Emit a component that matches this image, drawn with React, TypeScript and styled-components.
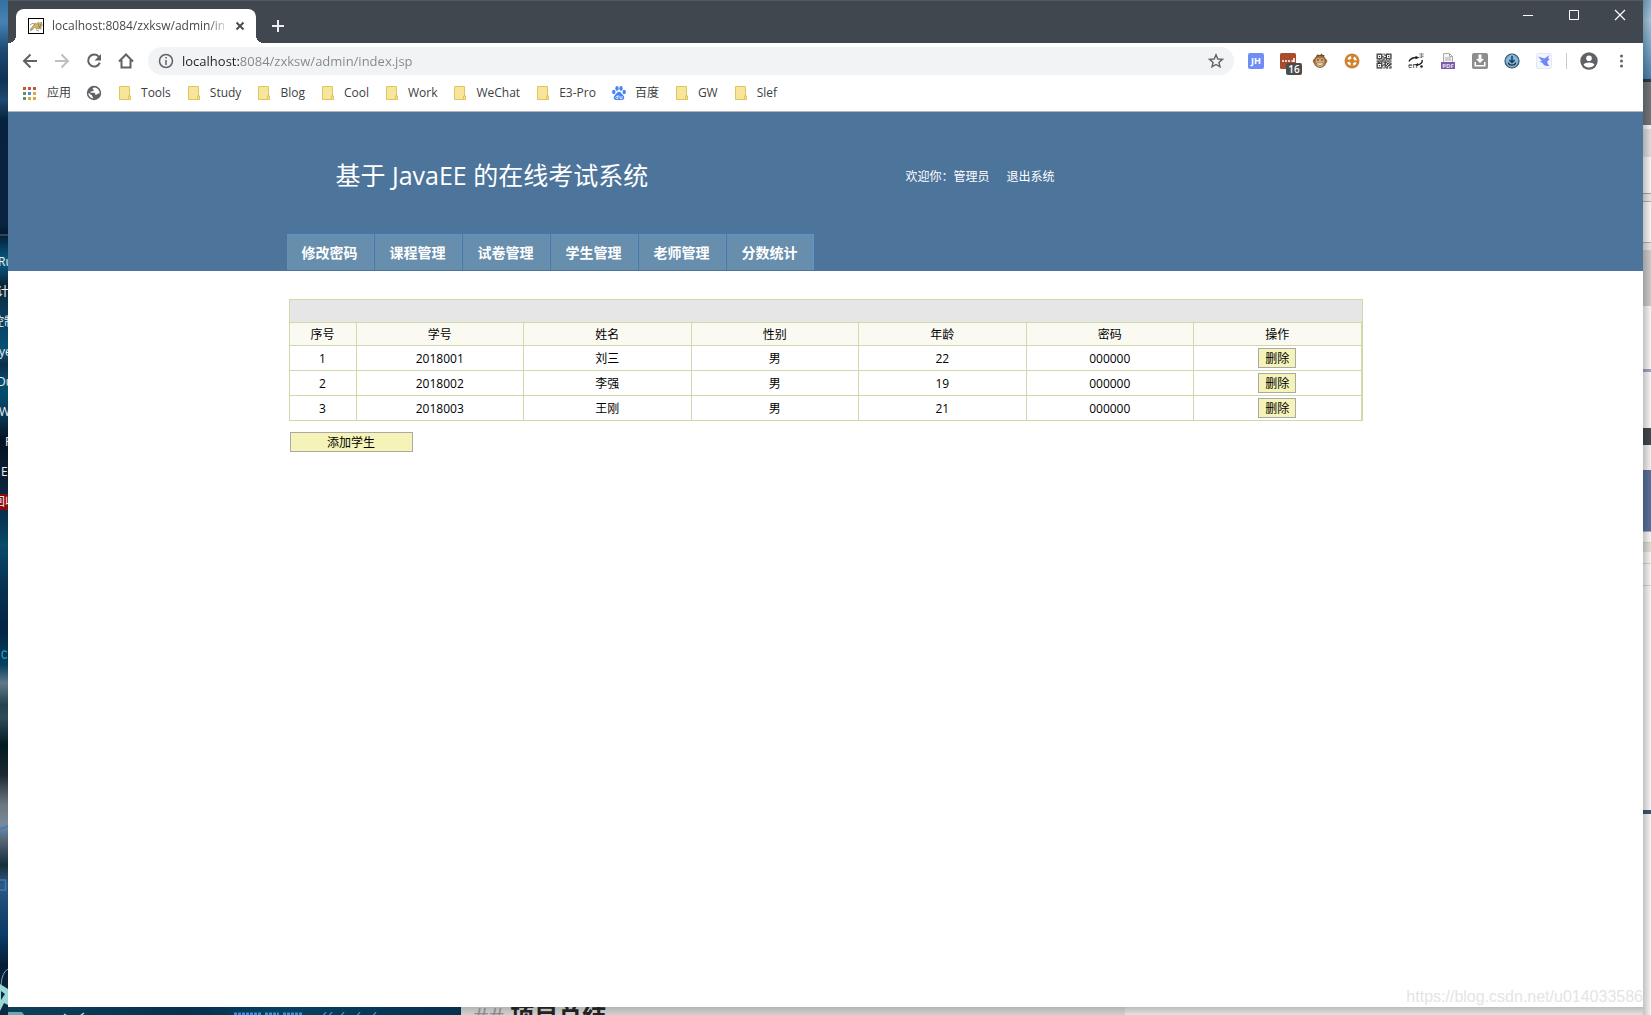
import React from "react";
import styled, { createGlobalStyle, css } from "styled-components";

const uiFont = `"Open Sans", "Noto Sans CJK SC", sans-serif`;

const GlobalStyle = createGlobalStyle`
  * { box-sizing: border-box; }
  body { margin: 0; font-family: ${uiFont}; font-size: 12px; color: #000; }
  button, input { font-family: inherit; }
`;

/* ---------- desktop behind the window ---------- */

const Desktop = styled.div`
  display: grid;
  grid-template-columns: 8px minmax(0, 1fr) 8px;
  grid-template-rows: minmax(0, 1fr) 8px;
  height: 100vh;
  min-height: 600px;
  overflow: hidden;
  background: #0a2d4c;
`;

const LeftEdge = styled.div`
  grid-row: 1 / 3;
  display: flex;
  flex-direction: column;
  overflow: hidden;
  padding-top: 254px;
  background: linear-gradient(
    #35709f 0, #4682b4 22px, #1c4a74 50px, #0d3355 80px, #1d4a70 100px, #06223d 120px,
    #08243f 225px, #04192e 234px, #587085 235px, #05203a 236px, #086088 262px, #0a2438 285px, #0b3a58 310px,
    #075078 350px, #0a2e48 365px, #075070 382px, #054060 410px, #051220 440px, #0a2036 480px,
    #063552 520px, #0a4a6a 545px, #06304f 590px, #042444 630px, #05405f 665px, #607888 683px,
    #24424f 705px, #2f4a58 718px, #021a22 745px, #1c2932 775px, #6c7882 805px, #7a8a98 825px,
    #35475a 853px, #15303a 865px, #2f5a80 885px, #174672 910px, #0a3a66 935px, #071c36 965px,
    #0c2c46 100%
  );
`;

const Shortcuts = styled.ul`
  margin: 0 0 117px;
  padding: 0;
  list-style: none;
`;

const Shortcut = styled.li<{ $shift: number; $selected?: boolean }>`
  height: 16px;
  margin: 0 0 14px;
  line-height: 16px;
  text-indent: ${(p) => p.$shift}px;
  white-space: nowrap;
  color: #eee;
  background: ${(p) => (p.$selected ? "#8c0a10" : "transparent")};
`;

const DesktopArt = styled.svg`
  display: block;
  flex: none;
  width: 8px;
  height: 370px;
`;

const RightEdge = styled.div`
  grid-row: 1 / 3;
  grid-column: 3;
  background: linear-gradient(90deg, rgba(0, 0, 0, 0.24), rgba(0, 0, 0, 0.04)),
    linear-gradient(
      #86b4d4 0, #a8cce2 20px, #7fb0d2 45px, #4a86b4 79px, #2c3c48 79px 82px, #75787e 82px 125px,
      #fff 125px 129px, #e4e6e8 129px 157px, #fff 157px 193px, #a8a8a8 193px 194px,
      #f0f0f0 194px 201px, #b4b4b4 201px 202px, #fff 202px 242px, #b4b4b4 242px 243px,
      #eee 243px 250px, #d2d2d2 250px 306px, #fff 306px 369px, #a5abc8 369px 372px,
      #fff 372px 428px, #444a52 428px 445px, #fafafa 445px 470px, #5a74a0 470px 531px,
      #aab6cc 531px 532px, #fff 532px 542px, #dcdfbc 542px 543px, #e8e8e0 543px 552px,
      #fff 552px 563px, #dcdfbc 563px 564px, #fff 564px 585px, #dcdfbc 585px 586px,
      #fff 586px 810px, #3c5a78 810px 814px, #fff 814px
    );
`;

const BottomEdge = styled.div`
  grid-column: 2;
  grid-row: 2;
  display: flex;
  overflow: hidden;
`;

const BottomWallpaper = styled.div`
  flex: none;
  width: 453px;
  overflow: hidden;
  background: linear-gradient(90deg, #0d4058, #07304e 40%, #064060 60%, #06304e);
`;

const EditorSliver = styled.div`
  flex: none;
  width: 664px;
  padding-left: 12px;
  overflow: hidden;
  white-space: nowrap;
  font-size: 24px;
  line-height: 18px;
  color: #8a8a8a;
  background: linear-gradient(#b4b4b4, #d0d0d0);

  b { color: #222; }
`;

const PreviewSliver = styled.div`
  flex: 1;
  background: linear-gradient(#bcbcbc, #e2e2e2);
`;

/* ---------- browser chrome ---------- */

const Window = styled.div`
  grid-column: 2;
  grid-row: 1;
  display: flex;
  flex-direction: column;
  min-width: 0;
  background: #fff;
`;

const TabStrip = styled.div`
  display: flex;
  height: 43px;
  padding: 0 0 0 8px;
  align-items: flex-end;
  background: #40474f;
  border-top: 1px solid #535a61;
`;

const Tab = styled.div`
  position: relative;
  display: flex;
  align-items: center;
  width: 240px;
  height: 34px;
  padding: 0 8px 0 12px;
  gap: 8px;
  border-radius: 8px 8px 0 0;
  background: #fff;

  &::before,
  &::after {
    content: "";
    position: absolute;
    bottom: 0;
    width: 8px;
    height: 8px;
  }
  &::before {
    left: -8px;
    background: radial-gradient(circle at 0 0, transparent 8px, #fff 8px);
  }
  &::after {
    right: -8px;
    background: radial-gradient(circle at 100% 0, transparent 8px, #fff 8px);
  }
`;

const TabTitle = styled.span`
  flex: 1;
  overflow: hidden;
  white-space: nowrap;
  line-height: 16px;
  color: #45494d;
  mask-image: linear-gradient(90deg, #000 156px, transparent 178px);
`;

const iconButton = css`
  display: inline-flex;
  align-items: center;
  justify-content: center;
  flex: none;
  padding: 0;
  border: 0;
  background: none;
  svg { display: block; }
`;

const TabButton = styled.button`
  ${iconButton}
  width: 16px;
  height: 16px;
`;

const NewTabButton = styled.button`
  ${iconButton}
  width: 28px;
  height: 28px;
  margin: 0 auto 3px 8px;
`;

const CaptionButton = styled.button`
  ${iconButton}
  align-self: flex-start;
  width: 46px;
  height: 28px;
`;

const Toolbar = styled.div`
  display: flex;
  align-items: center;
  height: 36px;
  padding: 0 6px;
`;

const ToolButton = styled.button`
  ${iconButton}
  position: relative;
  width: 32px;
  height: 28px;
`;

const AddressBar = styled.form`
  display: flex;
  flex: 1;
  align-items: center;
  min-width: 0;
  height: 28px;
  margin: 0 6px;
  padding: 0 2px 0 10px;
  gap: 8px;
  border-radius: 14px;
  background: #f1f3f4;
`;

const AddressInput = styled.input`
  flex: 1;
  min-width: 0;
  height: 24px;
  padding: 0;
  border: 0;
  outline: 0;
  font-size: 13px;
  color: transparent;
  background: linear-gradient(90deg, #202124 58px, #80868b 58px);
  background-clip: text;
  -webkit-background-clip: text;
`;

const ToolDivider = styled.span`
  width: 1px;
  height: 16px;
  margin: 0 6px;
  background: #c8cacd;
`;

const JhBadge = styled.span`
  width: 16px;
  height: 16px;
  border-radius: 2px;
  font-size: 9px;
  font-weight: 700;
  line-height: 16px;
  text-align: center;
  color: #fff;
  background: #6f8ef5;
`;

const CountBadge = styled.span`
  position: absolute;
  right: 2px;
  bottom: 0;
  width: 16px;
  height: 12px;
  border-radius: 2px;
  font-size: 10px;
  font-weight: 600;
  line-height: 12px;
  text-align: center;
  color: #fff;
  background: #4c4c4c;
`;

const Bookmarks = styled.nav`
  display: flex;
  align-items: center;
  height: 33px;
  padding: 0 15px 4px;
  gap: 15px;
  border-bottom: 1px solid #b4b6b8;
`;

const Bookmark = styled.a`
  display: flex;
  align-items: center;
  gap: 8px;
  line-height: 20px;
  white-space: nowrap;
  text-decoration: none;
  color: #3c4043;
  svg { display: block; }
`;

/* ---------- page ---------- */

const Page = styled.div`
  display: flex;
  flex: 1;
  flex-direction: column;
  min-height: 0;
`;

const Banner = styled.header`
  background: #4d749b;
`;

const Container = styled.div`
  width: 1080px;
  max-width: 100%;
  margin: 0 auto;
`;

const BannerTop = styled.div`
  display: grid;
  grid-template-columns: minmax(0, 1fr) 460px;
  align-items: center;
  height: 122px;
  padding: 4px 0 0 50px;
  color: #fff;
`;

const SystemTitle = styled.h1`
  margin: 0;
  font-size: 25px;
  font-weight: 400;
  line-height: 36px;
`;

const Account = styled.div`
  display: flex;
  gap: 17px;
  padding-top: 4px;
  line-height: 20px;
  a { color: #fff; text-decoration: none; }
`;

const Menu = styled.nav`
  display: flex;
  gap: 1px;
  height: 37px;
  padding-left: 1px;
`;

const MenuLink = styled.a`
  width: 87px;
  height: 36px;
  border: solid #5f93cb;
  border-width: 1px 1px 0 0;
  font-size: 14px;
  font-weight: 700;
  line-height: 36px;
  text-align: center;
  text-decoration: none;
  color: #fff;
  background: #688eae;
`;

const Content = styled.main`
  padding: 28px 3px 0;
`;

const TableFrame = styled.div`
  border: solid #d3d8a8;
  border-width: 1px 1px 0;
`;

const StudentTable = styled.table`
  width: 100%;
  table-layout: fixed;
  border-collapse: separate;
  border-spacing: 0;
  line-height: 16px;
  text-align: center;

  th, td {
    height: 25px;
    padding: 2px 0 0;
    font-weight: 400;
    border: solid #d3d8a8;
    border-width: 0 1px 1px 0;
  }
  thead th { height: 23px; background: #fafaf3; }
  thead td { height: 23px; border-right-width: 0; background: #e6e6e6; }
  tbody td:last-child { padding: 0; }
`;

const FormButton = styled.button<{ $wide?: boolean }>`
  display: block;
  width: ${(p) => (p.$wide ? "123px" : "38px")};
  height: 20px;
  margin: ${(p) => (p.$wide ? "11px 1px 0" : "0 auto")};
  padding: 2px 0 0;
  border: 1px solid #a9a9a9;
  font-size: 12px;
  line-height: 16px;
  color: #000;
  background: #f5f3b8;
`;

const Watermark = styled.div`
  margin: auto 0 1px;
  align-self: flex-end;
  font-family: "Liberation Sans", Arial, sans-serif;
  font-size: 16px;
  line-height: 18px;
  color: #e4e4e4;
`;

/* ---------- icons ---------- */

const Line: React.FC<{ d: string; color?: string; w?: number; size?: number }> = ({
  d, color = "#5f6368", w = 2, size = 16,
}) => (
  <svg width={size} height={size} viewBox="0 0 16 16" fill="none" stroke={color} strokeWidth={w}>
    <path d={d} />
  </svg>
);

const FolderIcon = () => (
  <svg width="16" height="16" viewBox="0 0 16 16">
    <path d="M2.5 1.5h10v9.500h1v3.500h-11z" fill="#f7e69a" stroke="#dfc65c" />
    <path d="M11.500 14.500v-3.500h2v3.500z" fill="#f7e69a" stroke="#dfc65c" />
  </svg>
);

const AppsIcon = () => {
  const colors = ["#c8573a", "#c8573a", "#c8573a", "#5d9463", "#4f86ec", "#dcaa3c", "#5d9463", "#dcaa3c", "#dcaa3c"];
  return (
    <svg width="16" height="16" viewBox="0 0 16 16">
      {colors.map((c, i) => (
        <rect key={i} x={(i % 3) * 5} y={2 + Math.floor(i / 3) * 5} width="3" height="3" fill={c} />
      ))}
    </svg>
  );
};

const GlobeIcon = () => (
  <svg width="16" height="16" viewBox="0 0 16 16">
    <circle cx="8" cy="8" r="7.200" fill="#5f6368" />
    <path d="M8.500 2.500c-2 .3-2.500 1.300-1 2.200 1 .6-.2 1.600-1.500 1.500-1.300 0-2 .8-1.200 1.600H8c1.200 0 1.600 1 1 2l2-.2c.5-1.200 1.500-1 2.700-1 .2-2.500-1.700-5.500-5.200-6.100zM2.200 8.200c.4 2.600 2 4.500 4.600 5.300l.2-1.500c-.9-.3-1.100-1-1-1.800-1.200-.1-1.800-.8-2-1.800z" fill="#fff" />
  </svg>
);

const BaiduIcon = () => (
  <svg width="16" height="16" viewBox="0 0 16 16" fill="#4a83f5">
    <ellipse cx="2.800" cy="7" rx="1.700" ry="2.200" />
    <ellipse cx="6" cy="3.400" rx="1.700" ry="2.300" />
    <ellipse cx="10" cy="3.400" rx="1.700" ry="2.300" />
    <ellipse cx="13.200" cy="7" rx="1.700" ry="2.200" />
    <path d="M8 6.800c2 0 2.500 2 4 3.300 2.500 2.500 1 5-1.200 5H5.200c-2.200 0-3.700-2.500-1.200-5 1.500-1.300 2-3.300 4-3.300z" />
    <path d="M7 10v3.500H5.500c-1 0-1-2 0-2H7M9 11v2.500h2V11" fill="none" stroke="#fff" strokeWidth=".8" />
  </svg>
);

const Favicon = () => (
  <svg width="16" height="16" viewBox="0 0 16 16">
    <rect x=".5" y=".5" width="15" height="15" fill="#fff" stroke="#000" />
    <path d="M7 5l1.500.8L10.500 4l1 1.300L13.500 4l.8 3.500-1.800 2 1 1.500-2.500-.5L9 11 6.500 9.500 3.500 12 2 11.500l3-3.500z" fill="#d0b46a" stroke="#6b5b34" strokeWidth=".4" />
    <path d="M2 7l3-2 2 2M2 13l3-2M8 12l3 1" fill="none" stroke="#777" strokeWidth=".7" />
    <path d="M10 7h1M12 7h1M10.500 9h2" stroke="#40351c" strokeWidth=".7" />
  </svg>
);

const DotsIcon = () => (
  <svg width="24" height="16" viewBox="0 0 24 16">
    <rect x="4" y="0" width="16" height="16" rx="1.500" fill="#a94c2b" />
    <path d="M6 8h2M9 8h2M12 8h2M15.500 8h2M18 5v4" stroke="#fff" strokeWidth="1.600" />
  </svg>
);

const MonkeyIcon = () => (
  <svg width="16" height="16" viewBox="0 0 16 16">
    <path d="M5 1.500l3 .5 2-1.500.5 1.500h2l-.5 2H4z" fill="#6b4a26" />
    <circle cx="2.700" cy="8" r="2" fill="#b57b3c" />
    <circle cx="13.300" cy="8" r="2" fill="#b57b3c" />
    <circle cx="8" cy="8.500" r="6" fill="#a8743a" stroke="#6b4a26" strokeWidth=".7" />
    <path d="M4 7c1-3 3-2 4-1 1-1 3-2 4 1 1 4-1 7-4 7s-5-3-4-7z" fill="#dcae78" />
    <circle cx="6" cy="7" r=".8" fill="#222" />
    <circle cx="10" cy="7" r=".8" fill="#222" />
    <path d="M4.500 10h7c0 3-7 3-7 0z" fill="#fff" stroke="#6b4a26" strokeWidth=".6" />
  </svg>
);

const OrangeIcon = () => (
  <svg width="16" height="16" viewBox="0 0 16 16">
    <circle cx="8" cy="8" r="7.500" fill="#d08330" />
    <circle cx="8" cy="8" r="3.800" fill="none" stroke="#fff" strokeWidth="2.400" strokeDasharray="3.400 2.569" transform="rotate(20 8 8)" />
  </svg>
);

const QrIcon = () => {
  const rows = [
    "1111101011111", "1000100110001", "1010110010101", "1000101110001", "1111101011111",
    "0010011010010", "1101110101101", "0110101110010", "1111100101101", "1000101101011",
    "1010110110110", "1000100101001", "1111101011011",
  ];
  return (
    <svg width="16" height="16" viewBox="-.5 -.5 14 14" fill="#303030">
      {rows.flatMap((r, y) =>
        r.split("").map((v, x) => (v === "1" ? <rect key={`${x}-${y}`} x={x} y={y} width="1.100" height="1.100" /> : null))
      )}
    </svg>
  );
};

const TranslateIcon = () => (
  <svg width="18" height="16" viewBox="0 0 18 16">
    <path d="M2 8.500c1-2.500 4-4 8-4M15 7c1 2-1 4.500-5 5" fill="none" stroke="#222" strokeWidth="1.400" />
    <path d="M8.500 3l4 1.500-4 1.700zM11 10l-3 2 3 1.200z" fill="#222" />
    <path d="M12 1h5M14.500 0v5M12.500 3h4M12.500 5l4-1.500" stroke="#555" strokeWidth=".6" />
    <text x="1" y="15" fontSize="8" fill="#111">en</text>
    <circle cx="14.500" cy="13.500" r="1.300" fill="#222" />
  </svg>
);

const PdfIcon = () => (
  <svg width="16" height="16" viewBox="0 0 16 16">
    <path d="M3.500 10V.5h6l3 3V10" fill="#f6f6f6" stroke="#a9a9a9" />
    <path d="M9.500.5v3h3M5 5h6M5 7h6" fill="none" stroke="#a9a9a9" />
    <rect x="1" y="9" width="14" height="7" fill="#7a5ca6" />
    <text x="8" y="15" fontSize="6" fontWeight="700" textAnchor="middle" fill="#e8e0f5">PDF</text>
  </svg>
);

const SaveIcon = () => (
  <svg width="16" height="16" viewBox="0 0 16 16">
    <rect width="16" height="16" rx="2" fill="#8d8d8d" />
    <path d="M6.500 1.500h3V6h2.500L8 10 4 6h2.500zM2.500 9v4.500h11V9H12v3H4V9z" fill="#fff" />
  </svg>
);

const DownloadIcon = () => (
  <svg width="16" height="16" viewBox="0 0 16 16">
    <circle cx="8" cy="8" r="7" fill="#86b6d8" stroke="#34526c" strokeWidth="1.200" />
    <path d="M8 3v6M5.500 7L8 9.500 10.500 7M4.500 9.500c0 3.500 7 3.500 7 0" fill="none" stroke="#173650" strokeWidth="1.400" />
  </svg>
);

const BirdIcon = () => (
  <svg width="16" height="16" viewBox="0 0 16 16">
    <rect x=".5" y=".5" width="15" height="15" rx="1.500" fill="#f4f6ff" stroke="#e3e7fa" />
    <path d="M2 3.500l6.500 2L13.500 2 12 5.500l2 .8-2.500 1.700c-.3 2 .3 3.500 2 4.800-3.500.8-6-.3-7-2.800L3.500 8.500 6 8z" fill="#7287f6" />
  </svg>
);

const AvatarIcon = () => (
  <svg width="18" height="18" viewBox="0 0 18 18">
    <circle cx="9" cy="9" r="8.700" fill="#5f6368" />
    <circle cx="9" cy="6.200" r="2.800" fill="#fff" />
    <path d="M3.600 12.800c1.200-3 9.600-3 10.800 0-2.400 3.600-8.400 3.600-10.800 0z" fill="#fff" />
  </svg>
);

const MenuDots = () => (
  <svg width="16" height="16" viewBox="0 0 16 16" fill="#5f6368">
    <circle cx="8.500" cy="3" r="1.500" />
    <circle cx="8.500" cy="8" r="1.500" />
    <circle cx="8.500" cy="13" r="1.500" />
  </svg>
);

/* ---------- data ---------- */

const shortcuts: { label: string; shift: number; selected?: boolean }[] = [
  { label: "Ru", shift: -2 },
  { label: "计", shift: -3 },
  { label: "控制", shift: -8 },
  { label: "ye", shift: -1 },
  { label: "Du", shift: -3 },
  { label: "W", shift: -1 },
  { label: "P", shift: 5 },
  { label: "E", shift: 1 },
  { label: "回收", shift: -7, selected: true },
];

const bookmarks: [string, React.FC][] = [
  ["应用", AppsIcon], ["", GlobeIcon], ["Tools", FolderIcon], ["Study", FolderIcon],
  ["Blog", FolderIcon], ["Cool", FolderIcon], ["Work", FolderIcon], ["WeChat", FolderIcon],
  ["E3-Pro", FolderIcon], ["百度", BaiduIcon], ["GW", FolderIcon], ["Slef", FolderIcon],
];

const extensions: [string, React.ReactNode][] = [
  ["JH", <JhBadge>JH</JhBadge>],
  ["Passwords", <><DotsIcon /><CountBadge>16</CountBadge></>],
  ["Monkey", <MonkeyIcon />],
  ["Proxy", <OrangeIcon />],
  ["QR", <QrIcon />],
  ["Translate", <TranslateIcon />],
  ["PDF", <PdfIcon />],
  ["Save", <SaveIcon />],
  ["Download", <DownloadIcon />],
  ["Bird", <BirdIcon />],
];

const menu = ["修改密码", "课程管理", "试卷管理", "学生管理", "老师管理", "分数统计"];
const columns = ["序号", "学号", "姓名", "性别", "年龄", "密码", "操作"];
const students = [
  ["1", "2018001", "刘三", "男", "22", "000000"],
  ["2", "2018002", "李强", "男", "19", "000000"],
  ["3", "2018003", "王刚", "男", "21", "000000"],
];

const BrowserChrome = () => (
  <>
    <TabStrip>
      <Tab>
        <Favicon />
        <TabTitle>localhost:8084/zxksw/admin/index.jsp</TabTitle>
        <TabButton aria-label="Close tab"><Line d="M4.500 4.500l7 7M11.500 4.500l-7 7" color="#45494d" w={1.8} /></TabButton>
      </Tab>
      <NewTabButton aria-label="New tab"><Line d="M8 2v12M2 8h12" color="#eee" /></NewTabButton>
      <CaptionButton aria-label="Minimize"><Line d="M3 8.500h10" color="#fff" w={1} /></CaptionButton>
      <CaptionButton aria-label="Maximize"><Line d="M3.500 3.500h9v9h-9z" color="#fff" w={1} /></CaptionButton>
      <CaptionButton aria-label="Close"><Line d="M3 3l10 10M13 3L3 13" color="#fff" w={1.2} /></CaptionButton>
    </TabStrip>
    <Toolbar>
      <ToolButton aria-label="Back"><Line d="M15 8H2.500M8.500 1.500L2 8l6.500 6.500" /></ToolButton>
      <ToolButton aria-label="Forward"><Line d="M1 8h12.500M7.500 1.500L14 8l-6.500 6.500" color="#bcbec0" /></ToolButton>
      <ToolButton aria-label="Reload">
        <svg width="16" height="16" viewBox="0 0 16 16">
          <path d="M13 4A6 6 0 1 0 13.800 9.700" fill="none" stroke="#5f6368" strokeWidth="2" />
          <path d="M15 1v6.500H8.500z" fill="#5f6368" />
        </svg>
      </ToolButton>
      <ToolButton aria-label="Home"><Line d="M1 8.500L8 1.500l7 7M3.500 7v7.500h9V7" /></ToolButton>
      <AddressBar>
        <Line d="M8 1.500a6.500 6.500 0 1 0 0 13 6.500 6.500 0 0 0 0-13zM8 7v5M8 4v1.600" w={1.5} />
        <AddressInput aria-label="Address" defaultValue="localhost:8084/zxksw/admin/index.jsp" />
        <ToolButton type="button" aria-label="Bookmark">
          <Line d="M8 1.800l1.800 4.200 4.600.4-3.500 3 1.100 4.500L8 11.500l-4 2.400 1.100-4.500-3.500-3 4.600-.4z" w={1.4} />
        </ToolButton>
      </AddressBar>
      {extensions.map(([name, icon]) => (
        <ToolButton key={name} aria-label={name}>{icon}</ToolButton>
      ))}
      <ToolDivider />
      <ToolButton aria-label="Profile"><AvatarIcon /></ToolButton>
      <ToolButton aria-label="Menu"><MenuDots /></ToolButton>
    </Toolbar>
    <Bookmarks>
      {bookmarks.map(([label, Icon], i) => (
        <Bookmark key={i} href="#" aria-label={label || "Website"}>
          <Icon />
          {label && <span>{label}</span>}
        </Bookmark>
      ))}
    </Bookmarks>
  </>
);

export default function App() {
  return (
    <Desktop>
      <GlobalStyle />
      <LeftEdge>
        <Shortcuts>
          {shortcuts.map((s) => (
            <Shortcut key={s.label} $shift={s.shift} $selected={s.selected}>{s.label}</Shortcut>
          ))}
        </Shortcuts>
        <DesktopArt viewBox="0 0 8 370" fill="none">
          <path d="M7 15q-5-3-5 2.500t5 3" transform="translate(0 -4)" stroke="#22a8c0" strokeWidth="1.300" />
          <path d="M0 188l8-3M0 193h2M6 192h2" stroke="#2f7be0" strokeWidth="1.500" />
          <path d="M0 239h5.500v10H0" stroke="#3a78c0" strokeWidth="1.500" />
          <path d="M8 328q-6 3-7 16" stroke="#7f9fae" />
          <path d="M0 343l8 5v16l-4-2-4 8z" fill="#9ad8d6" />
          <path d="M1 350l4 3-4 6z" fill="#0c2c46" />
        </DesktopArt>
      </LeftEdge>
      <Window>
        <BrowserChrome />
        <Page>
          <Banner>
            <Container>
              <BannerTop>
                <SystemTitle>基于 JavaEE 的在线考试系统</SystemTitle>
                <Account>
                  <span>欢迎你：管理员</span>
                  <a href="#">退出系统</a>
                </Account>
              </BannerTop>
              <Menu>
                {menu.map((m) => <MenuLink key={m} href="#">{m}</MenuLink>)}
              </Menu>
            </Container>
          </Banner>
          <Container>
            <Content>
              <TableFrame>
                <StudentTable>
                  <colgroup>
                    <col width="67" />
                    {columns.slice(1).map((c) => <col key={c} />)}
                  </colgroup>
                  <thead>
                    <tr><td colSpan={7} /></tr>
                    <tr>{columns.map((c) => <th key={c} scope="col">{c}</th>)}</tr>
                  </thead>
                  <tbody>
                    {students.map((row) => (
                      <tr key={row[0]}>
                        {row.map((v, i) => <td key={i}>{v}</td>)}
                        <td><FormButton>删除</FormButton></td>
                      </tr>
                    ))}
                  </tbody>
                </StudentTable>
              </TableFrame>
              <FormButton $wide>添加学生</FormButton>
            </Content>
          </Container>
          <Watermark>https://blog.csdn.net/u014033586</Watermark>
        </Page>
      </Window>
      <RightEdge />
      <BottomEdge>
        <BottomWallpaper>
          <svg width="453" height="8" viewBox="0 0 453 8" fill="none">
            <path d="M0 0h14l6 8H0z" fill="#6aa9b0" />
            <path d="M56 2l6 4 10-2 4-3" stroke="#a8dcdc" strokeWidth="1.500" />
            <path d="M226 2.500h27M257 2.500h14M275 2.500h20" stroke="#3e8ee8" strokeWidth="4" strokeDasharray="3 1" />
            <path d="M312 8l6-8M318 8l6-8M330 8l6-8M346 8l6-8M362 8l6-8" stroke="#3f80d0" strokeWidth="1.500" />
          </svg>
        </BottomWallpaper>
        <EditorSliver>## <b>项目总结</b></EditorSliver>
        <PreviewSliver />
      </BottomEdge>
    </Desktop>
  );
}
